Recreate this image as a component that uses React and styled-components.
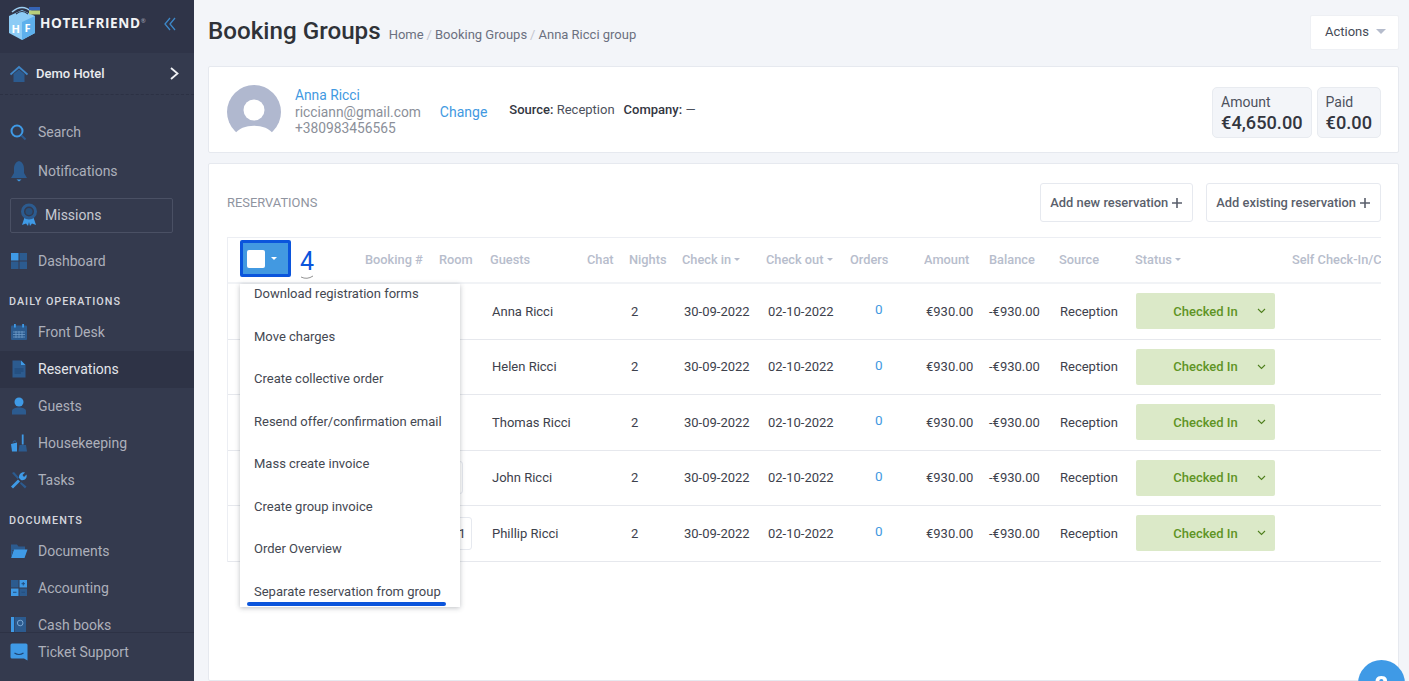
import React from "react";
import styled, { createGlobalStyle } from "styled-components";

const BRIGHT = "#3f9ae6";
const DARK = "#2c5b8f";

const GlobalStyle = createGlobalStyle`
  html, body {
    margin: 0;
    height: 100%;
    overflow: hidden;
  }
  body {
    font-family: Roboto, "Liberation Sans", sans-serif;
    background: #f3f5f9;
  }
  * {
    box-sizing: border-box;
  }
`;

const Page = styled.div`
  display: flex;
  height: 100vh;
  overflow: hidden;
`;

/* sidebar */
const Sidebar = styled.aside`
  flex: 0 0 194px;
  display: flex;
  flex-direction: column;
  background: #343a4e;
  height: 100%;
`;

const Brand = styled.div`
  flex: 0 0 53px;
  display: flex;
  align-items: center;
  padding: 0 18px 5px 9px;
  background: #2f3448;
`;

const BrandName = styled.span`
  font-family: "Open Sans", sans-serif;
  font-weight: 700;
  font-size: 13.6px;
  letter-spacing: 0.6px;
  color: #f2f3f5;
  margin: -3px 0 0 -1px;
  sup {
    font-size: 6px;
    font-weight: 400;
    color: #aab;
    vertical-align: 5px;
    letter-spacing: 0;
    line-height: 0;
  }
`;

const Collapse = styled.span`
  margin-left: auto;
  display: flex;
`;

const HotelRow = styled.div`
  flex: 0 0 42px;
  display: flex;
  align-items: center;
  padding: 0 15px 0 10px;
  border-bottom: 1px dashed #2c3144;
`;

const HotelName = styled.span`
  margin-left: 8px;
  font-size: 13px;
  font-weight: 500;
  color: #e9ebef;
`;

const HotelChevron = styled.span`
  margin-left: auto;
  display: flex;
`;

const Nav = styled.nav`
  flex: 1;
  min-height: 0;
  overflow: hidden;
  padding-top: 17.5px;
`;

const NavItem = styled.div`
  display: flex;
  align-items: center;
  height: ${(p) => (p.$tall ? "39px" : "37px")};
  padding-left: 10px;
  gap: 10px;
  font-size: 14px;
  color: ${(p) => (p.$active ? "#e4e6eb" : "#adb0bb")};
  background: ${(p) => (p.$active ? "#2e3346" : "transparent")};
`;

const MissionsBox = styled.div`
  display: flex;
  align-items: center;
  gap: 7px;
  height: 35px;
  width: 163px;
  margin: 7.5px 0 9.5px 10px;
  padding: 0 0 2px 9px;
  border: 1px solid #4a5064;
  border-radius: 2px;
  font-size: 14px;
  color: #c6c9d1;
`;

const Section = styled.div`
  display: flex;
  align-items: flex-end;
  height: 34px;
  padding: 0 0 6px 9px;
  font-size: 10.8px;
  line-height: 13px;
  font-weight: 500;
  letter-spacing: 1px;
  color: #d5d7de;
`;

const SideFooter = styled.div`
  flex: 0 0 49px;
  display: flex;
  align-items: flex-start;
  border-top: 1px solid #2d3245;
`;

/* main column */
const Main = styled.main`
  flex: 1;
  min-width: 0;
  padding: 15px 10px 0 14px;
  display: flex;
  flex-direction: column;
  gap: 10px;
`;

const TopBar = styled.header`
  display: flex;
  align-items: center;
  height: 35px;
  margin-bottom: 6px;
`;

const Title = styled.h1`
  margin: 0 8px 0 0;
  font-size: 24.2px;
  font-weight: 500;
  color: #2f3238;
  position: relative;
  top: -2px;
`;

const Crumbs = styled.div`
  font-size: 13px;
  color: #6b7080;
  padding-top: 3px;
  i {
    font-style: normal;
    color: #c3c6cf;
    margin: 0 3px;
  }
`;

const ActionsButton = styled.button`
  margin-left: auto;
  width: 89px;
  height: 35px;
  display: flex;
  align-items: center;
  justify-content: space-between;
  padding: 0 12px 3px 14px;
  background: #fff;
  border: 1px solid #eef0f4;
  border-radius: 2px;
  font: 400 13px Roboto, sans-serif;
  color: #454a56;
`;

const Caret = styled.span`
  display: inline-block;
  width: 0;
  height: 0;
  border-left: ${(p) => p.$size || 4}px solid transparent;
  border-right: ${(p) => p.$size || 4}px solid transparent;
  border-top: ${(p) => p.$size || 4}px solid ${(p) => p.$color || "#b5bccc"};
`;

const Card = styled.section`
  background: #fff;
  border: 1px solid #e6e9ef;
  border-radius: 2px;
  ${(p) => p.$grow && "flex: 1; padding: 19px 17px 0 18px;"}
`;

const GuestCard = styled(Card)`
  display: flex;
  align-items: center;
  height: 87px;
  padding: 4px 17px 0 18px;
`;

const Contact = styled.div`
  margin-left: 14px;
  font-size: 13.8px;
  line-height: 16.5px;
  color: #8b8f99;
  padding-top: 1px;
`;

const LinkText = styled.span`
  display: block;
  color: #4299e1;
`;

const ChangeLink = styled(LinkText)`
  font-size: 14px;
  margin: 0 0 0 19px;
`;

const Meta = styled.div`
  margin: -5px 0 0 22px;
  font-size: 13px;
  color: #4c505c;
  display: flex;
  gap: 9px;
  b {
    font-weight: 500;
    color: #33363f;
  }
`;

const Totals = styled.div`
  margin-left: auto;
  display: flex;
  gap: 5px;
  margin-top: 1px;
`;

const Total = styled.div`
  height: 51px;
  padding: 6px 8px;
  background: #f3f5f9;
  border: 1px solid #e8ebf0;
  border-radius: 5px;
  font-size: 14px;
  line-height: 16px;
  color: #4d515d;
  strong {
    display: block;
    margin-top: 2px;
    font-size: 18.2px;
    line-height: 21px;
    font-weight: 500;
    color: #33363f;
  }
`;

const CardHead = styled.div`
  display: flex;
  align-items: center;
  height: 39px;
  margin-bottom: 15px;
`;

const CardLabel = styled.span`
  font-size: 12.9px;
  color: #8f94a0;
  margin-right: auto;
`;

const AddButton = styled.button`
  display: flex;
  align-items: center;
  gap: 3px;
  height: 39px;
  margin-left: 13px;
  padding: 0 9px;
  background: #fff;
  border: 1px solid #e6e9ef;
  border-radius: 3px;
  font: 500 12.9px Roboto, sans-serif;
  color: #5a5f6c;
`;

/* table */
const TableWrap = styled.div`
  position: relative;
  border-top: 1px solid #eceef3;
  border-left: 1px solid #eceef3;
`;

const COLUMNS = "137px 74px 51px 97px 42px 53px 84px 84px 74px 65px 70px 76px 157px 89px";

const HeadRow = styled.div`
  display: grid;
  grid-template-columns: ${COLUMNS};
  align-items: center;
  height: 46px;
  border-bottom: 2px solid #f1f3f6;
`;

const HeadCell = styled.div`
  display: flex;
  align-items: center;
  gap: 3px;
  font-size: 12.8px;
  font-weight: 500;
  color: #b7bdcc;
  white-space: nowrap;
  overflow: hidden;
  padding-bottom: 1px;
`;

const BulkCell = styled.div`
  padding: 0 0 3px 12px;
`;

const BulkButton = styled.div`
  display: flex;
  align-items: center;
  width: 51px;
  height: 37px;
  padding-left: 4px;
  gap: 6px;
  background: #4299e1;
  border: 3px solid #0b55dc;
  border-radius: 2px;
`;

const BulkCheck = styled.span`
  width: 18px;
  height: 18px;
  background: #fff;
  border-radius: 2px;
`;

const BodyRow = styled.div`
  display: grid;
  grid-template-columns: ${COLUMNS};
  align-items: center;
  height: 55.5px;
  border-bottom: 1px solid #e6e8ed;
`;

const Cell = styled.div`
  padding-left: ${(p) => p.$inset ?? 2}px;
  font-size: 13px;
  color: #3d414c;
  white-space: nowrap;
`;

const RoomCell = styled.div`
  display: flex;
  justify-content: flex-end;
  padding-right: ${(p) => p.$gap}px;
  grid-column: 3;
  margin-left: -60px;
`;

const RoomBadge = styled.span`
  height: 33px;
  padding: 0 5px;
  display: flex;
  align-items: center;
  border: 1px solid #e6e9ef;
  border-radius: 3px;
  font-size: 13.6px;
  color: #3d414c;
`;

const OrderCount = styled.div`
  padding: 0 0 4px 25px;
  font-size: 13.5px;
  color: #4299e1;
`;

const StatusPill = styled.div`
  position: relative;
  margin-left: 1px;
  width: 139px;
  height: 36px;
  display: flex;
  align-items: center;
  justify-content: center;
  background: #dbe9c8;
  border-radius: 2px;
  font-size: 13px;
  font-weight: 500;
  color: #5f9425;
  svg {
    position: absolute;
    right: 9px;
    top: 15px;
  }
`;

const Menu = styled.div`
  position: absolute;
  top: 46px;
  left: 12px;
  width: 220px;
  height: 323px;
  overflow: hidden;
  background: #fff;
  box-shadow: 0 1px 5px rgba(40, 45, 60, 0.3);
`;

const MenuList = styled.div`
  margin-top: -11.5px;
`;

const MenuItem = styled.div`
  display: flex;
  align-items: center;
  height: 42.5px;
  padding-left: 14px;
  font-size: 13px;
  color: #444852;
  white-space: nowrap;
`;

const Underline = styled.div`
  position: absolute;
  left: 7px;
  bottom: 1px;
  width: 199px;
  height: 4px;
  background: #0b55dc;
  border-radius: 2px;
`;

const StepMark = styled.div`
  position: absolute;
  left: 69px;
  top: 10px;
  width: 20px;
  height: 30px;
  font-size: 25px;
  line-height: 28px;
  font-weight: 400;
  text-align: center;
  color: #0b55dc;
  svg {
    position: absolute;
    left: 0;
    top: 20px;
  }
  span {
    position: relative;
  }
`;

const HelpBubble = styled.div`
  position: fixed;
  left: 1358px;
  top: 660px;
  width: 47px;
  height: 47px;
  border-radius: 50%;
  background: #3f9ae6;
  color: #fff;
  font-size: 26px;
  font-weight: 700;
  text-align: center;
  line-height: 52px;
`;

/* icons */
const Svg = ({ children, w = 18, h = 18, vb = "0 0 18 18" }) => (
  <svg width={w} height={h} viewBox={vb} style={{ flex: "none" }}>
    {children}
  </svg>
);

const HotelLogo = () => (
  <svg width="32" height="40" viewBox="0 0 32 40" style={{ flex: "none" }}>
    <path d="M0 12 L13 6 L26 12 L26 29 L13 36 L0 29Z" fill="#8ccbf5" />
    <path d="M13 18 L26 12 L26 29 L13 36Z" fill="#5eb0ec" />
    <path d="M3 8 Q13 -1 23 8" fill="none" stroke="#9ccdf0" strokeWidth="1.500" />
    <path d="M7 10 Q13 5 19 10" fill="none" stroke="#2f3448" strokeWidth="1.200" />
    <rect x="20" y="3" width="11" height="3.500" fill="#3563b5" />
    <rect x="20" y="6.500" width="11" height="4" fill="#b9cf7a" />
    <text x="2.500" y="29" fontSize="11" fontWeight="700" fill="#fff" fontFamily="Open Sans">H</text>
    <text x="15.500" y="28" fontSize="11" fontWeight="700" fill="#fff" fontFamily="Open Sans">F</text>
  </svg>
);

const HouseIcon = () => (
  <Svg>
    <path d="M3.500 9 L9 4.500 L14.500 9 L14.500 17 L3.500 17Z" fill={DARK} />
    <path d="M0.500 9.500 L9 2 L17.500 9.500" fill="none" stroke="#3f86c8" strokeWidth="1.800" />
  </Svg>
);

const SearchIcon = () => (
  <Svg>
    <circle cx="7" cy="8" r="5.500" fill="none" stroke={BRIGHT} strokeWidth="2" />
    <path d="M11.500 12.500 L15.500 16.500" stroke={DARK} strokeWidth="2" />
  </Svg>
);

const BellIcon = () => (
  <Svg h={22} vb="0 0 18 22">
    <path d="M9 1 C12.500 2 14 5 14 9 L14 13 L17 18 L1 18 L4 13 L4 9 C4 5 5.500 2 9 1Z" fill={DARK} />
    <path d="M6.500 19.500 H11.500 L9 21.500Z" fill={BRIGHT} />
  </Svg>
);

const RibbonIcon = () => (
  <Svg h={24} vb="0 0 18 24">
    <path d="M5 13 L2 22 L6 20.500 L8 23 L10 15Z" fill={BRIGHT} />
    <path d="M13 13 L16 22 L12 20.500 L10 23 L8 15Z" fill={BRIGHT} />
    <circle cx="9" cy="8.500" r="6.500" fill="none" stroke={DARK} strokeWidth="3" />
    <circle cx="9" cy="8.500" r="3.500" fill="#28507d" />
  </Svg>
);

const GridIcon = () => (
  <Svg>
    <rect x="1" y="1" width="7.500" height="7.500" fill={BRIGHT} />
    <rect x="9.500" y="1" width="7.500" height="7.500" fill={DARK} />
    <rect x="1" y="9.500" width="7.500" height="7.500" fill={DARK} />
    <rect x="9.500" y="9.500" width="7.500" height="7.500" fill={DARK} />
  </Svg>
);

const CalendarIcon = () => (
  <Svg>
    <rect x="1" y="2.500" width="16" height="14.500" rx="1" fill={DARK} />
    <rect x="4" y="1" width="1.800" height="3.500" fill={BRIGHT} />
    <rect x="12.200" y="1" width="1.800" height="3.500" fill={BRIGHT} />
    <path d="M3 9 H15 M3 11.500 H15 M3 14 H15 M6 8 V15 M9 8 V15 M12 8 V15" stroke="#6f9cc8" strokeWidth="0.800" />
  </Svg>
);

const DocIcon = () => (
  <Svg>
    <path d="M2.500 0.500 H11 L15.500 5 V17.500 H2.500Z" fill={DARK} />
    <path d="M11 0.500 L15.500 5 H11Z" fill={BRIGHT} />
    <path d="M4.500 9 H13.500 M4.500 11 H13.500 M4.500 13 H11" stroke="#1f4674" strokeWidth="1" />
  </Svg>
);

const PersonIcon = () => (
  <Svg>
    <circle cx="9" cy="5" r="4.500" fill={BRIGHT} />
    <path d="M2 17.500 V14.500 C2 11.500 5 10.500 9 10.500 C13 10.500 16 11.500 16 14.500 V17.500Z" fill={DARK} />
  </Svg>
);

const BroomIcon = () => (
  <Svg>
    <rect x="11.800" y="0.500" width="1.800" height="10" fill={BRIGHT} />
    <path d="M9.500 11 H16 L17 17.500 H8.500Z" fill={DARK} />
    <path d="M1 10 L7 8.500 V17.500 H2Z" fill={BRIGHT} />
    <path d="M3 8.500 Q4 6 6 7.500" fill="none" stroke={DARK} strokeWidth="1.200" />
  </Svg>
);

const WrenchIcon = () => (
  <Svg>
    <path d="M1 15.500 L8 8.500 L10 10.500 L3 17.500Z" fill={BRIGHT} />
    <path d="M9 7 C8.500 3.500 11.500 0.500 15 1.500 L12.500 4 L14 6 L16.500 3.500 C17.500 7 14.500 10 11 9Z" fill={BRIGHT} />
    <path d="M2 2 L4 1 L9 6.500 L7.500 8Z M11 11 L16.500 15.500 L15 17.500 L10 12.500Z" fill={DARK} />
  </Svg>
);

const FolderIcon = () => (
  <Svg>
    <path d="M1 2.500 H7 L8.500 4.500 H15 V8 H1Z" fill={DARK} />
    <path d="M1 16 L4 7.500 H17.500 L14.500 16Z" fill={BRIGHT} />
    <path d="M1 7 V16 L3 9Z" fill={DARK} />
  </Svg>
);

const CalcIcon = () => (
  <Svg>
    <rect x="1" y="1" width="7.500" height="7.500" fill={DARK} />
    <rect x="9.500" y="1" width="7.500" height="7.500" fill={BRIGHT} />
    <rect x="1" y="9.500" width="7.500" height="7.500" fill={BRIGHT} />
    <rect x="9.500" y="9.500" width="7.500" height="7.500" fill={DARK} />
    <path d="M11.500 4.700 H15 M13.250 3 V6.500 M3 13.250 H6.500 M11.500 13.250 H15" stroke="#234d7d" strokeWidth="1" />
  </Svg>
);

const BookIcon = () => (
  <Svg>
    <rect x="1" y="1" width="3" height="16" fill={BRIGHT} />
    <rect x="4.500" y="1" width="11.500" height="16" fill={DARK} />
    <circle cx="10.200" cy="7" r="2.800" fill="none" stroke="#7ba7d2" strokeWidth="1" />
  </Svg>
);

const ChatIcon = () => (
  <Svg>
    <path d="M2 0.500 H16 A1.500 1.500 0 0 1 17.500 2 V17.500 L14 15.500 H2 A1.500 1.500 0 0 1 0.500 14 V2 A1.500 1.500 0 0 1 2 0.500Z" fill={BRIGHT} />
    <path d="M4.500 10 Q9 13 13.500 10" fill="none" stroke="#1f4674" strokeWidth="1.200" />
  </Svg>
);

const Avatar = () => (
  <svg width="54" height="54" viewBox="0 0 54 54" style={{ flex: "none" }}>
    <defs>
      <clipPath id="avatarClip">
        <rect x="0" y="0" width="54" height="48" />
      </clipPath>
    </defs>
    <circle cx="27" cy="27" r="27" fill="#b0b8cf" clipPath="url(#avatarClip)" />
    <circle cx="27" cy="25" r="10.500" fill="#fff" />
    <path d="M8 49 C14 38 40 38 46 49Z" fill="#fff" />
  </svg>
);

const Plus = () => (
  <svg width="12" height="12" viewBox="0 0 12 12">
    <path d="M6 1 V11 M1 6 H11" stroke="#5a5f6c" strokeWidth="1.600" />
  </svg>
);

const Chevron = () => (
  <svg width="9" height="6" viewBox="0 0 9 6">
    <path d="M1 1 L4.500 4.500 L8 1" fill="none" stroke="#4f7f1e" strokeWidth="1.100" />
  </svg>
);

const rows = [
  { guest: "Anna Ricci" },
  { guest: "Helen Ricci" },
  { guest: "Thomas Ricci" },
  { guest: "John Ricci", room: "109", gap: 27 },
  { guest: "Phillip Ricci", room: "101", gap: 18 },
];

const menuItems = [
  "Download registration forms",
  "Move charges",
  "Create collective order",
  "Resend offer/confirmation email",
  "Mass create invoice",
  "Create group invoice",
  "Order Overview",
  "Separate reservation from group",
];

const App = () => {
  return (
    <Page>
      <GlobalStyle />
      <Sidebar>
        <Brand>
          <HotelLogo />
          <BrandName>
            HOTELFRIEND<sup>®</sup>
          </BrandName>
          <Collapse>
            <svg width="12" height="14" viewBox="0 0 12 14">
              <path d="M6 1 L1 7 L6 13 M11 1 L6 7 L11 13" fill="none" stroke="#3d88c9" strokeWidth="1.300" />
            </svg>
          </Collapse>
        </Brand>
        <HotelRow>
          <HouseIcon />
          <HotelName>Demo Hotel</HotelName>
          <HotelChevron>
            <svg width="9" height="13" viewBox="0 0 9 13">
              <path d="M1 1 L7.500 6.500 L1 12" fill="none" stroke="#f0f1f4" strokeWidth="1.800" />
            </svg>
          </HotelChevron>
        </HotelRow>
        <Nav>
          <NavItem $tall>
            <SearchIcon />
            Search
          </NavItem>
          <NavItem $tall>
            <BellIcon />
            Notifications
          </NavItem>
          <MissionsBox>
            <RibbonIcon />
            Missions
          </MissionsBox>
          <NavItem>
            <GridIcon />
            Dashboard
          </NavItem>
          <Section>DAILY OPERATIONS</Section>
          <NavItem>
            <CalendarIcon />
            Front Desk
          </NavItem>
          <NavItem $active>
            <DocIcon />
            Reservations
          </NavItem>
          <NavItem>
            <PersonIcon />
            Guests
          </NavItem>
          <NavItem>
            <BroomIcon />
            Housekeeping
          </NavItem>
          <NavItem>
            <WrenchIcon />
            Tasks
          </NavItem>
          <Section>DOCUMENTS</Section>
          <NavItem>
            <FolderIcon />
            Documents
          </NavItem>
          <NavItem>
            <CalcIcon />
            Accounting
          </NavItem>
          <NavItem>
            <BookIcon />
            Cash books
          </NavItem>
        </Nav>
        <SideFooter>
          <NavItem>
            <ChatIcon />
            Ticket Support
          </NavItem>
        </SideFooter>
      </Sidebar>

      <Main>
        <TopBar>
          <Title>Booking Groups</Title>
          <Crumbs>
            Home<i>/</i>Booking Groups<i>/</i>Anna Ricci group
          </Crumbs>
          <ActionsButton>
            Actions
            <Caret $size={5} />
          </ActionsButton>
        </TopBar>

        <GuestCard>
          <Avatar />
          <Contact>
            <LinkText>Anna Ricci</LinkText>
            ricciann@gmail.com
            <br />
            +380983456565
          </Contact>
          <ChangeLink>Change</ChangeLink>
          <Meta>
            <span>
              <b>Source:</b> Reception
            </span>
            <span>
              <b>Company:</b> —
            </span>
          </Meta>
          <Totals>
            <Total>
              Amount
              <strong>€4,650.00</strong>
            </Total>
            <Total>
              Paid
              <strong>€0.00</strong>
            </Total>
          </Totals>
        </GuestCard>

        <Card $grow>
          <CardHead>
            <CardLabel>RESERVATIONS</CardLabel>
            <AddButton>
              Add new reservation <Plus />
            </AddButton>
            <AddButton>
              Add existing reservation <Plus />
            </AddButton>
          </CardHead>
          <TableWrap>
            <HeadRow>
              <BulkCell>
                <BulkButton>
                  <BulkCheck />
                  <Caret $size={3} $color="#fff" />
                </BulkButton>
              </BulkCell>
              <HeadCell>Booking #</HeadCell>
              <HeadCell>Room</HeadCell>
              <HeadCell>Guests</HeadCell>
              <HeadCell>Chat</HeadCell>
              <HeadCell>Nights</HeadCell>
              <HeadCell>
                Check in <Caret $size={3} />
              </HeadCell>
              <HeadCell>
                Check out <Caret $size={3} />
              </HeadCell>
              <HeadCell>Orders</HeadCell>
              <HeadCell>Amount</HeadCell>
              <HeadCell>Balance</HeadCell>
              <HeadCell>Source</HeadCell>
              <HeadCell>
                Status <Caret $size={3} />
              </HeadCell>
              <HeadCell>Self Check-In/Check-Out</HeadCell>
            </HeadRow>
            {rows.map((row) => (
              <BodyRow key={row.guest}>
                {row.room ? (
                  <RoomCell $gap={row.gap}>
                    <RoomBadge>{row.room}</RoomBadge>
                  </RoomCell>
                ) : (
                  <RoomCell $gap={0} />
                )}
                <Cell>{row.guest}</Cell>
                <span />
                <Cell>2</Cell>
                <Cell>30-09-2022</Cell>
                <Cell>02-10-2022</Cell>
                <OrderCount>0</OrderCount>
                <Cell>€930.00</Cell>
                <Cell $inset={0}>-€930.00</Cell>
                <Cell $inset={1}>Reception</Cell>
                <StatusPill>
                  Checked In
                  <Chevron />
                </StatusPill>
              </BodyRow>
            ))}
            <StepMark>
              <svg width="20" height="12" viewBox="0 0 20 12">
                <path d="M1 5 Q4 1 8 3 Q14 0 18 4 Q20 8 14 9 Q8 11 3 8Z" fill="#fff" />
                <path d="M4 9 Q10 12 16 8" fill="none" stroke="#777" strokeWidth="0.800" />
              </svg>
              <span>4</span>
            </StepMark>
            <Menu>
              <MenuList>
                {menuItems.map((item) => (
                  <MenuItem key={item}>{item}</MenuItem>
                ))}
              </MenuList>
              <Underline />
            </Menu>
          </TableWrap>
        </Card>
      </Main>
      <HelpBubble>?</HelpBubble>
    </Page>
  );
};

export default App;
